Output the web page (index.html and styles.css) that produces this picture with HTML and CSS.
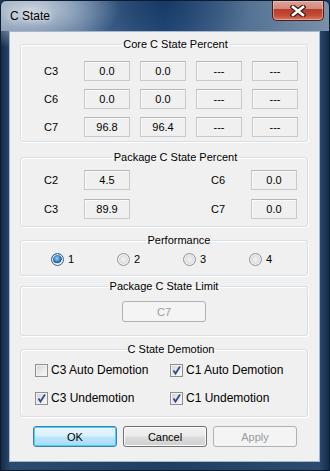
FILE: index.html
```html
<!DOCTYPE html>
<html lang="en">
<head>
<meta name="viewport" content="width=device-width, initial-scale=1">
<title>C State</title>
<link rel="stylesheet" href="styles.css">
</head>
<body>

<div class="window">
    <div class="titlebar">
        <span class="title">C State</span>
        <button class="closeBtn">
            <svg width="16" height="12" viewBox="0 0 16 12">
                <path d="M3 2 L13 10 M13 2 L3 10" stroke="#3b1d1a" stroke-width="5" stroke-linecap="square"/>
                <path d="M3 2 L13 10 M13 2 L3 10" stroke="#ffffff" stroke-width="2.6" stroke-linecap="square"/>
            </svg>
        </button>
    </div>

    <div class="client">
        <fieldset class="group core">
            <legend>Core C State Percent</legend>
            <div class="core-grid">
                <span class="lbl">C3</span>
                <span class="val">0.0</span>
                <span class="val">0.0</span>
                <span class="val">---</span>
                <span class="val">---</span>
                <span class="lbl">C6</span>
                <span class="val">0.0</span>
                <span class="val">0.0</span>
                <span class="val">---</span>
                <span class="val">---</span>
                <span class="lbl">C7</span>
                <span class="val">96.8</span>
                <span class="val">96.4</span>
                <span class="val">---</span>
                <span class="val">---</span>
            </div>
        </fieldset>

        <fieldset class="group package">
            <legend>Package C State Percent</legend>
            <div class="pkg-grid">
                <span class="lbl">C2</span>
                <span class="val">4.5</span>
                <span></span>
                <span class="lbl">C6</span>
                <span class="val">0.0</span>
                <span class="lbl">C3</span>
                <span class="val">89.9</span>
                <span></span>
                <span class="lbl">C7</span>
                <span class="val">0.0</span>
            </div>
        </fieldset>

        <fieldset class="group perf">
            <legend>Performance</legend>
            <div class="radio-row">
                <label class="radio-item"><span class="radio on"></span>1</label>
                <label class="radio-item"><span class="radio"></span>2</label>
                <label class="radio-item"><span class="radio"></span>3</label>
                <label class="radio-item"><span class="radio"></span>4</label>
            </div>
        </fieldset>

        <fieldset class="group limit">
            <legend>Package C State Limit</legend>
            <div class="limit-row">
                <button class="btn disabled">C7</button>
            </div>
        </fieldset>

        <fieldset class="group demotion">
            <legend>C State Demotion</legend>
            <div class="check-grid">
                <label class="check-item"><span class="check"></span>C3 Auto Demotion</label>
                <label class="check-item"><span class="check on"></span>C1 Auto Demotion</label>
                <label class="check-item"><span class="check on"></span>C3 Undemotion</label>
                <label class="check-item"><span class="check on"></span>C1 Undemotion</label>
            </div>
        </fieldset>

        <div class="buttons">
            <button class="btn default">OK</button>
            <button class="btn">Cancel</button>
            <button class="btn disabled">Apply</button>
        </div>
    </div>
</div>

</body>
</html>
```

FILE: styles.css
```css
* {
    box-sizing: border-box;
}

body {
    margin: 0;
    width: 330px;
    height: 471px;
    font-family: 'Liberation Sans', Arial, sans-serif;
    font-size: 11px;
    color: #000;
    background: #1b3556;
}

.window {
    width: 330px;
    height: 471px;
    display: flex;
    flex-direction: column;
    padding: 0 9px 8px 8px;
    border: 1px solid #0c1c30;
    border-radius: 6px 6px 0 0;
    background:
        radial-gradient(ellipse 90px 40px at 30px 8px, rgba(215, 222, 232, 0.85), rgba(215, 222, 232, 0) 100%),
        radial-gradient(ellipse 90px 60px at 160px 0px, rgba(10, 40, 80, 0.6), rgba(10, 40, 80, 0) 100%),
        linear-gradient(90deg, #6f88a6 0%, #41648d 35%, #2a5283 50%, #4d6c90 70%, #7a90aa 100%) top / 100% 30px no-repeat,
        linear-gradient(90deg, #162c48 0%, #2a4a70 3%, #1f3e64 50%, #2a4a70 97%, #162c48 100%);
}

.titlebar {
    height: 30px;
    flex: none;
    display: flex;
    justify-content: space-between;
    align-items: flex-start;
}

.title {
    margin-top: 8px;
    margin-left: 1px;
    font-size: 12px;
    color: #000;
    text-shadow: 0 0 6px rgba(255, 255, 255, 0.9), 0 0 10px rgba(255, 255, 255, 0.6);
}

.closeBtn {
    width: 52px;
    height: 20px;
    margin-top: 0;
    margin-right: -4px;
    padding: 0;
    border: 1px solid #4a1c16;
    border-top: none;
    border-radius: 0 0 5px 5px;
    display: flex;
    align-items: center;
    justify-content: center;
    background: linear-gradient(180deg, #dea196 0%, #d28a7d 40%, #b53c28 45%, #c34a35 75%, #d67a62 100%);
    box-shadow: inset 0 0 0 1px rgba(255, 210, 200, 0.5);
}

.client {
    flex: 1;
    background: #f0f0f0;
    border: 1px solid #a7b8ca;
    padding: 6px 11px 0 10px;
}

.group {
    margin: 0;
    padding: 0;
    border: 1px solid #d5dfe5;
    border-radius: 3px;
    box-shadow: inset 1px 1px 0 #fff, 1px 1px 0 #fff;
    min-width: 0;
}

.group legend {
    margin: 0 auto;
    padding: 0 2px;
    line-height: 13px;
    font-size: 11px;
}

.lbl {
    line-height: 20px;
}

.val {
    height: 20px;
    line-height: 18px;
    text-align: center;
    border: 1px solid #c9c9c9;
    border-top-color: #b5b5b5;
    background: #f0f0f0;
    box-shadow: inset 1px 1px 0 #fafafa;
}

/* core */
.core {
    padding: 10px 0 4px 23px;
}

.core-grid {
    display: grid;
    grid-template-columns: 30px 46px 46px 46px 46px;
    column-gap: 10px;
    row-gap: 8px;
}

/* package */
.package {
    margin-top: 9px;
    padding: 6px 0 7px 23px;
}

.pkg-grid {
    display: grid;
    grid-template-columns: 30px 46px 61px 30px 46px;
    column-gap: 10px;
    row-gap: 9px;
}

/* performance */
.perf {
    margin-top: 7px;
    padding: 6px 0 9px 30px;
}

.radio-row {
    display: flex;
}

.radio-item {
    flex: none;
    width: 66px;
    display: flex;
    align-items: center;
    gap: 4px;
    line-height: 13px;
}

.radio {
    width: 13px;
    height: 13px;
    border-radius: 50%;
    border: 1px solid #939393;
    background: radial-gradient(circle at 50% 50%, #f5f5f5 0%, #dcdcdc 55%, #c8c8c8 100%);
    box-shadow: inset 0 0 0 1px #f4f4f4;
}

.radio.on {
    border-color: #2c628b;
    background:
        radial-gradient(circle at 45% 40%, #9fd2f5 0%, #3a84c8 35%, #1d4e86 52%, rgba(0, 0, 0, 0) 56%),
        radial-gradient(circle, #e8e8e8 0%, #d4d4d4 100%);
}

/* limit */
.limit {
    margin-top: 4px;
    padding: 8px 0 13px 0;
}

.limit-row {
    display: flex;
    justify-content: center;
}

/* demotion */
.demotion {
    margin-top: 7px;
    padding: 8px 0 11px 14px;
}

.check-grid {
    display: grid;
    grid-template-columns: 135px 120px;
    row-gap: 15px;
}

.check-item {
    display: flex;
    align-items: center;
    gap: 3px;
    line-height: 13px;
    font-size: 12px;
}

.check {
    width: 13px;
    height: 13px;
    border: 1px solid #8e8f8f;
    background: linear-gradient(135deg, #d2d2d2 0%, #ececec 60%, #f8f8f8 100%);
    box-shadow: inset 0 0 0 1px #f2f2f2;
}

.check.on {
    background:
        url("data:image/svg+xml,%3Csvg xmlns='http://www.w3.org/2000/svg' width='11' height='11'%3E%3Cpath d='M2.5 5.5 L4.5 8.5 L9 1.5' fill='none' stroke='%23324c8a' stroke-width='1.8'/%3E%3C/svg%3E") center / 11px 11px no-repeat,
        linear-gradient(135deg, #d2d2d2 0%, #ececec 60%, #f8f8f8 100%);
}

/* buttons */
.btn {
    width: 84px;
    height: 21px;
    padding: 0;
    font-family: 'Liberation Sans', Arial, sans-serif;
    font-size: 11px;
    font-weight: normal;
    color: #000;
    border: 1px solid #707070;
    border-radius: 3px;
    background: linear-gradient(180deg, #f2f2f2 0%, #ebebeb 48%, #dddddd 52%, #cfcfcf 100%);
    box-shadow: inset 0 0 0 1px #fcfcfc;
}

.btn.default {
    border-color: #3c7fb1;
    background: linear-gradient(180deg, #eaf6fd 0%, #d9f0fc 48%, #bee6fd 52%, #a7d9f5 100%);
    box-shadow: inset 0 0 0 1px #48d0f8;
}

.btn.disabled {
    color: #9a9a9a;
    border-color: #adb2b5;
    background: #f4f4f4;
    box-shadow: none;
}

.buttons {
    margin-top: 9px;
    padding-left: 13px;
    display: flex;
    gap: 6px;
}
```
